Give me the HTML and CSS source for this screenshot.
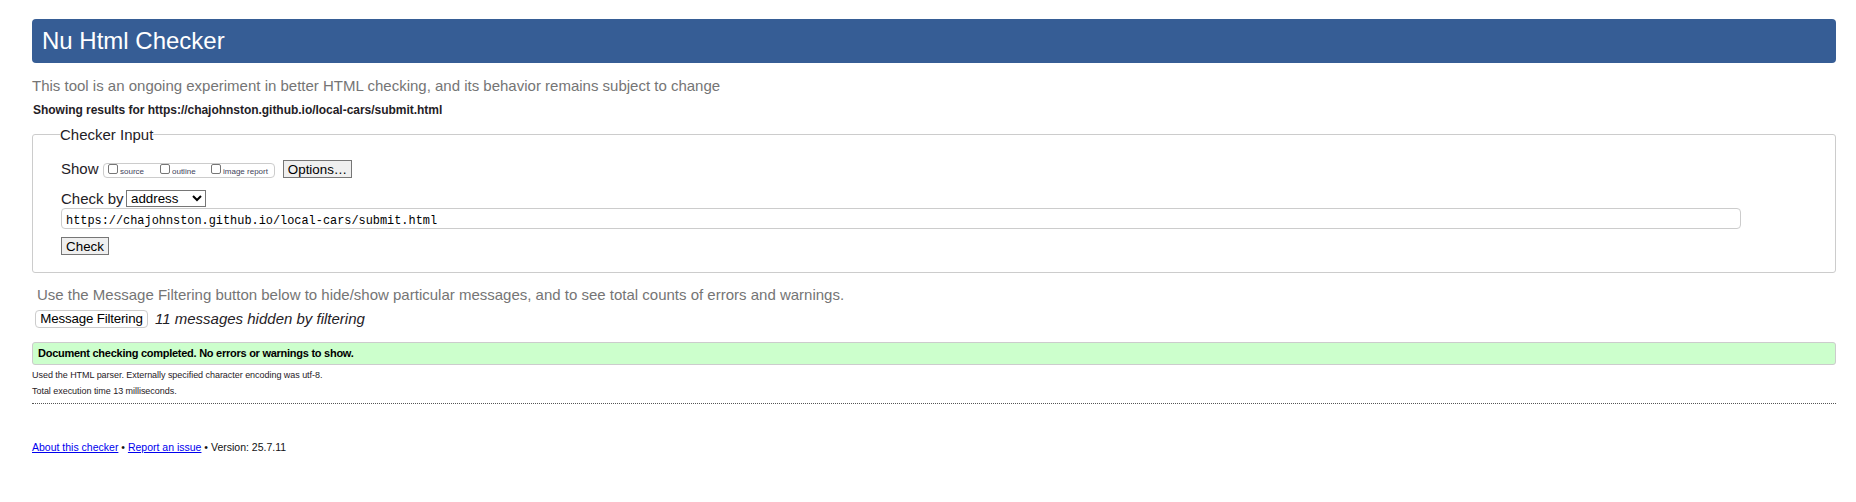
FILE: index.html
```html
<!DOCTYPE html>
<html lang="en">
<head>
<meta charset="utf-8">
<title>Nu Html Checker</title>
<link rel="stylesheet" href="styles.css">
</head>
<body>
<h1 class="banner"><span>Nu Html Checker</span></h1>
<p class="tagline"><span>This tool is an ongoing experiment in better HTML checking, and its behavior remains subject to change</span></p>
<h2 class="results-title"><span>Showing results for https://chajohnston.github.io/local-cars/submit.html</span></h2>
<form>
<fieldset class="checker">
<legend class="legend">Checker Input</legend>
<div class="row show-row">
<span class="show-label">Show</span>
<span class="options">
<label class="opt opt-source"><input type="checkbox" class="box"><span>source</span></label>
<label class="opt opt-outline"><input type="checkbox" class="box"><span>outline</span></label>
<label class="opt opt-image"><input type="checkbox" class="box"><span>image report</span></label>
</span>
<button type="button" class="btn options-btn">Options…</button>
</div>
<div class="row by-row">
<label class="by-label" for="by">Check by</label>
<span class="select-wrap">
<select id="by" class="select"><option>address</option></select>
<svg class="chevron" viewBox="0 0 10 7" aria-hidden="true"><path d="M1 1l4 4 4-4"/></svg>
</span>
</div>
<input class="address" type="text" aria-label="Address" value="https://chajohnston.github.io/local-cars/submit.html">
<button type="button" class="btn check-btn">Check</button>
</fieldset>
</form>
<p class="hint"><span>Use the Message Filtering button below to hide/show particular messages, and to see total counts of errors and warnings.</span></p>
<div class="filter-row">
<button type="button" class="filter-btn">Message Filtering</button>
<em class="hidden-count">11 messages hidden by filtering</em>
</div>
<p class="success"><span>Document checking completed. No errors or warnings to show.</span></p>
<p class="detail"><span>Used the HTML parser. Externally specified character encoding was utf-8.</span></p>
<p class="detail time"><span>Total execution time 13 milliseconds.</span></p>
<hr class="rule">
<p class="about"><span><a href="#">About this checker</a> • <a href="#">Report an issue</a> • Version: 25.7.11</span></p>
</body>
</html>
```
FILE: styles.css
```css
* { box-sizing: border-box; }
body {
  margin: 0;
  padding: 19px 20px 0 32px;
  background: #fff;
  color: #1f2126;
  font-family: "Liberation Sans", Arial, sans-serif;
  font-size: 15px;
}
h1, h2, p { margin: 0; white-space: nowrap; }
.banner {
  height: 44px;
  padding-left: 10px;
  border-radius: 4px;
  background: #365d95;
  color: #fff;
  font-size: 24px;
  font-weight: 400;
  line-height: 44px;
}
.tagline { margin-top: 13px; color: #757575; line-height: 20px; }
.results-title { margin: 5px 0 0 1px; font-size: 12px; line-height: 18px; letter-spacing: -0.03px; }
.checker {
  height: 147px;
  margin: 7px 0 0;
  padding: 17px 0 0 28px;
  border: 1px solid #ccc;
  border-radius: 3px;
}
.legend { margin-left: -1px; padding: 0; line-height: 18px; height: 17px; }
.row { display: flex; }
.show-row { align-items: flex-end; height: 18px; }
.show-label { width: 42px; line-height: 18px; }
.options {
  display: flex;
  width: 172px;
  height: 15px;
  padding-left: 4px;
  border: 1px solid #ccc;
  border-radius: 4px;
  font-size: 8px;
  line-height: 15px;
  color: #41435a;
  white-space: nowrap;
}
.opt { display: flex; }
.opt-source { width: 52px; }
.opt-outline { width: 51px; }
.box {
  appearance: none;
  width: 10px;
  height: 10px;
  margin: 0 2px 0 0;
  border: 1px solid #767676;
  border-radius: 2px;
  background: #fff;
  flex: none;
}
.btn {
  height: 18px;
  padding: 1px 0 0;
  border: 1px solid #767676;
  border-radius: 0;
  background: #efefef;
  color: #000;
  font: 13.33px/16px "Liberation Sans", Arial, sans-serif;
}
.options-btn { width: 69px; margin-left: 8px; }
.by-row { margin-top: 12px; height: 17px; }
.by-label { width: 65px; line-height: 17px; white-space: nowrap; }
.select-wrap { position: relative; height: 17px; }
.select {
  appearance: none;
  display: block;
  width: 80px;
  height: 17px;
  padding: 0 0 0 4px;
  border: 1px solid #767676;
  border-radius: 0;
  background: #fff;
  color: #000;
  font: 13.33px/15px "Liberation Sans", Arial, sans-serif;
}
.chevron {
  position: absolute;
  right: 4px;
  top: 5px;
  width: 10px;
  height: 7px;
  fill: none;
  stroke: #000;
  stroke-width: 2;
}
.address {
  display: block;
  width: 1680px;
  height: 21px;
  margin: 1px 0 0;
  padding: 5px 4px 0;
  border: 1px solid #ccc;
  border-radius: 4px;
  color: #000;
  font: 11.9px "Liberation Mono", monospace;
}
.check-btn { display: block; width: 48px; margin-top: 8px; }
.hint { margin: 12px 0 0 5px; color: #757575; line-height: 20px; }
.filter-row { display: flex; height: 18px; margin: 5px 0 0 3px; }
.filter-btn {
  width: 113px;
  height: 18px;
  padding: 0;
  border: 1px solid #ccc;
  border-radius: 4px;
  background: #fff;
  color: #000;
  font: 13.33px/16px "Liberation Sans", Arial, sans-serif;
  letter-spacing: -0.17px;
  white-space: nowrap;
}
.hidden-count { margin-left: 7px; line-height: 18px; white-space: nowrap; }
.success {
  height: 23px;
  margin-top: 14px;
  padding-left: 5px;
  border: 1px solid #ccc;
  border-radius: 3px;
  background: #cfc;
  color: #000;
  font-size: 11px;
  font-weight: 700;
  line-height: 21px;
  letter-spacing: -0.26px;
}
.detail { margin-top: 2px; font-size: 9px; line-height: 16px; letter-spacing: -0.04px; }
.time { margin-top: 0; }
.rule { height: 1px; margin: 4px 0 0; border: 0; border-top: 1px dotted #555; }
.about { margin-top: 34px; color: #111; font-size: 10.5px; line-height: 18px; }
.about a { color: #00e; }
```
